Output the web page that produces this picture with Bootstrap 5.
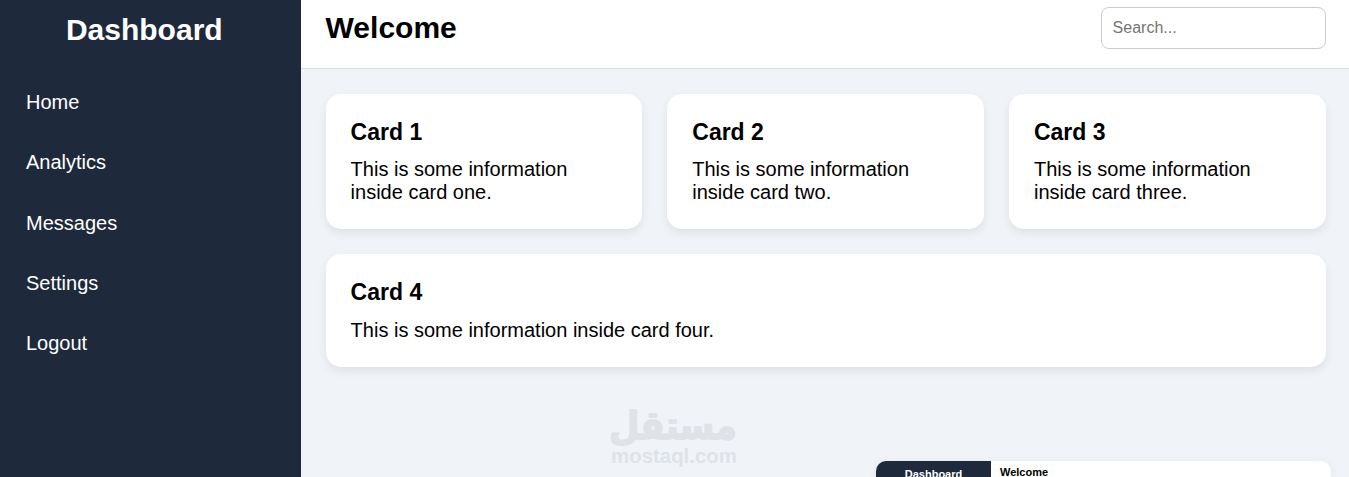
<!DOCTYPE html>
<html lang="en">
<head>
<meta charset="utf-8">
<title>Dashboard</title>
<link rel="stylesheet" href="https://cdn.jsdelivr.net/npm/bootstrap@5.3.0/dist/css/bootstrap.min.css">
<style>
html,body{height:477px;overflow:hidden}
body{font-family:"Liberation Sans",Arial,sans-serif;background:#f0f4f8;color:#000;position:relative}
.shell{height:477px}
.side{width:300.6px;flex:none;background:#1e293b;color:#fff}
.brand{font-size:30px;font-weight:700;line-height:34px;margin:13px 12px 0 0;text-align:center}
.menu{margin:44px 0 0;padding:0 0 0 26px;list-style:none;display:flex;flex-direction:column;gap:37.3px}
.menu a{color:#fff;text-decoration:none;font-size:20px;line-height:23px;display:block}
.main-area{min-width:0}
.top{height:69px;background:#fff;border-bottom:1px solid #ddd;padding:7px 23.4px 0 25px}
.top h1{font-size:30px;font-weight:700;line-height:37px;margin:2px 0 0}
.finder{width:225px;height:42px;border:1px solid #ccc;border-radius:8px;padding:0 11px;font-size:16px;font-family:inherit;color:#000;background:#fff}
.finder::placeholder{color:#757575;opacity:1}
.board{padding:25px 23.4px 0 25px;gap:25px}
.tile{background:#fff;border-radius:15px;padding:25px;box-shadow:0 4px 10px rgba(0,0,0,.08)}
.tile h3{font-size:23px;font-weight:700;line-height:26px;margin:0 0 13px}
.tile p{font-size:20px;line-height:23px;margin:0}
.tile-row{gap:25px}
.tile-row .tile{flex:1 1 0;min-width:0}
.tile-wide p{margin-top:14px}
.tile-wide h3{margin-bottom:0}
.thumb{position:absolute;left:876px;top:461px;width:455px;height:16px;border-radius:10px 10px 0 0;overflow:hidden;background:#fff;box-shadow:0 2px 8px rgba(0,0,0,.08);font-size:11px;font-weight:700;line-height:13px}
.thumb-side{width:115px;background:#1e293b;color:#fff;text-align:center;padding-top:7px}
.thumb-main{padding:5px 0 0 9px;color:#000}
.mark-wrap{position:absolute;left:611px;top:408px;width:126px;text-align:center;color:#dfe3e8;font-weight:700;pointer-events:none}
.mark-ar{font-family:"DejaVu Sans",sans-serif;font-size:35px;line-height:36px;display:block;white-space:nowrap;-webkit-text-stroke:1.5px #dfe3e8;transform:scaleY(1.1)}
.mark-en{font-size:20.4px;line-height:20px;display:block;margin-top:2px}
</style>
</head>
<body>
<div class="d-flex shell">
  <aside class="side">
    <div class="brand">Dashboard</div>
    <ul class="menu">
      <li><a href="#">Home</a></li>
      <li><a href="#">Analytics</a></li>
      <li><a href="#">Messages</a></li>
      <li><a href="#">Settings</a></li>
      <li><a href="#">Logout</a></li>
    </ul>
  </aside>
  <div class="main-area flex-grow-1 d-flex flex-column">
    <header class="top d-flex justify-content-between align-items-start">
      <h1>Welcome</h1>
      <input class="finder" type="text" placeholder="Search..." aria-label="Search">
    </header>
    <main class="board d-flex flex-column">
      <div class="tile-row d-flex">
        <section class="tile"><h3>Card 1</h3><p>This is some information inside card one.</p></section>
        <section class="tile"><h3>Card 2</h3><p>This is some information inside card two.</p></section>
        <section class="tile"><h3>Card 3</h3><p>This is some information inside card three.</p></section>
      </div>
      <section class="tile tile-wide"><h3>Card 4</h3><p>This is some information inside card four.</p></section>
    </main>
  </div>
</div>
<div class="mark-wrap" dir="ltr"><span class="mark-ar" dir="rtl" lang="ar">مستقل</span><span class="mark-en">mostaql.com</span></div>
<div class="thumb d-flex"><div class="thumb-side">Dashboard</div><div class="thumb-main">Welcome</div></div>
</body>
</html>
